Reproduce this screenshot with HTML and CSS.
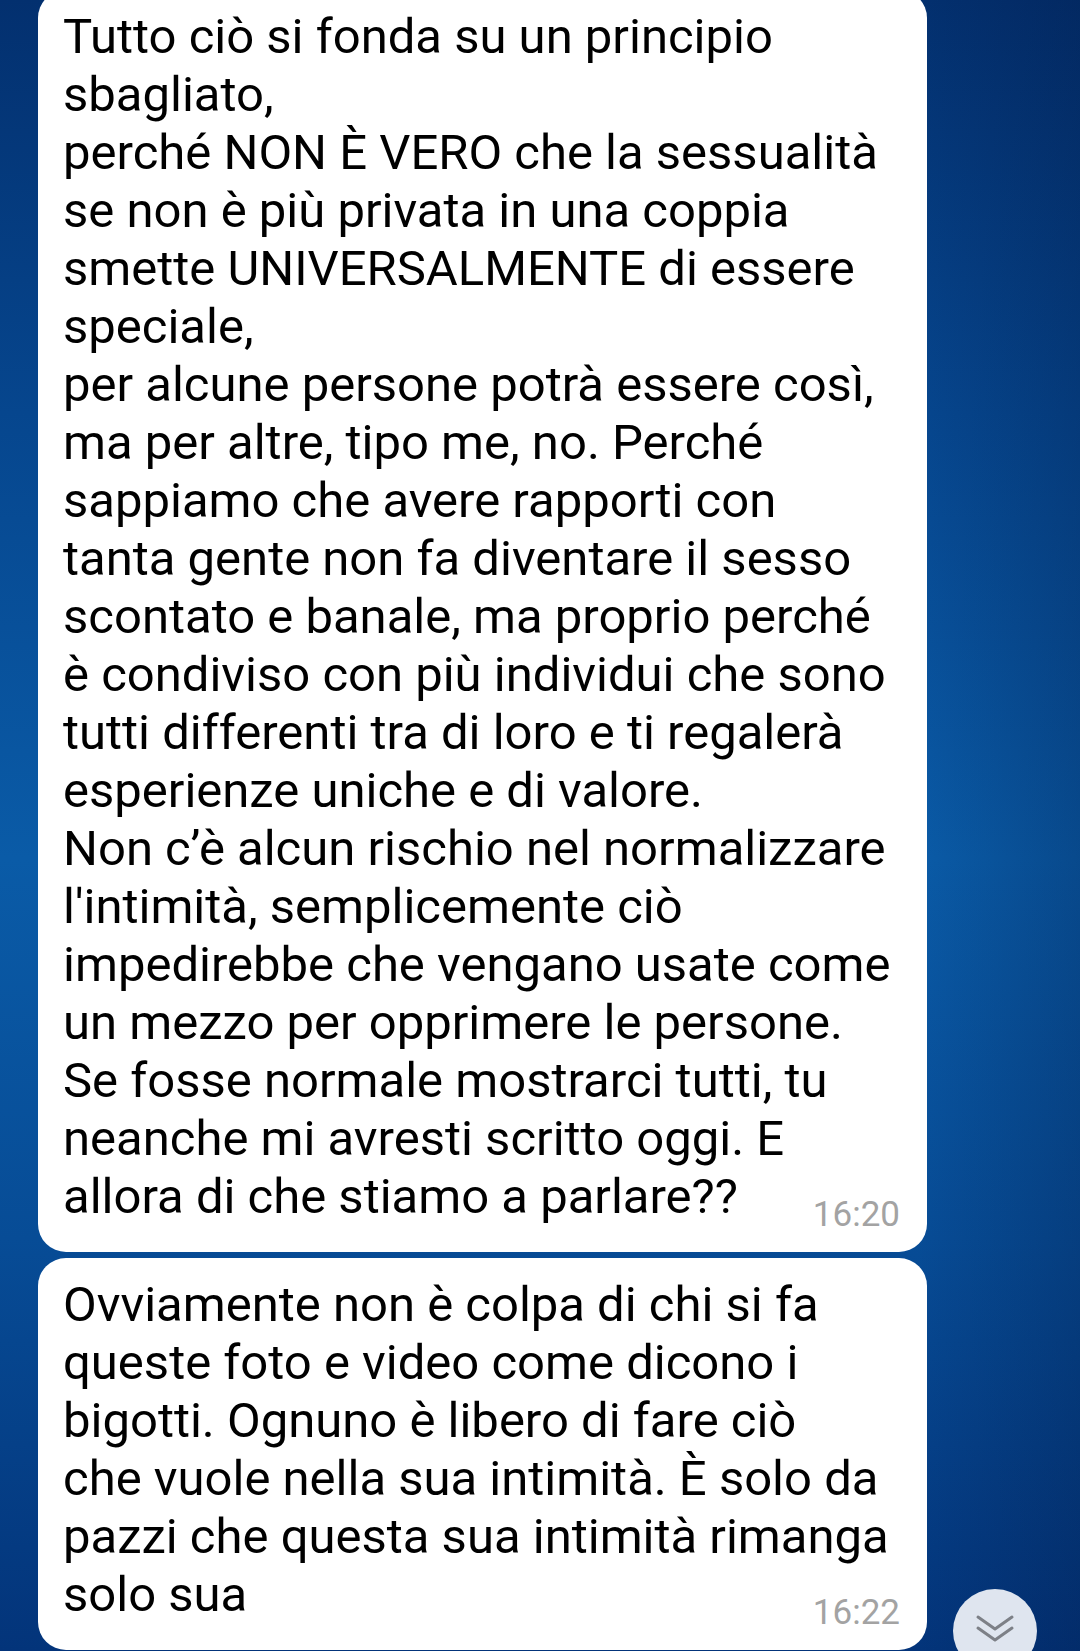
FILE: index.html
```html
<!DOCTYPE html>
<html lang="it">
<head>
  <meta charset="UTF-8" />
  <meta name="viewport" content="width=device-width, initial-scale=1.0"/>
  <title>Chat</title>
  <link rel="stylesheet" href="styles.css">
</head>
<body>
  <div class="chat">
    <div class="bubble first">
      <p class="msg">Tutto ciò si fonda su un principio<br>
sbagliato,<br>
perché NON È VERO che la sessualità<br>
se non è più privata in una coppia<br>
smette UNIVERSALMENTE di essere<br>
speciale,<br>
per alcune persone potrà essere così,<br>
ma per altre, tipo me, no. Perché<br>
sappiamo che avere rapporti con<br>
tanta gente non fa diventare il sesso<br>
scontato e banale, ma proprio perché<br>
è condiviso con più individui che sono<br>
tutti differenti tra di loro e ti regalerà<br>
esperienze uniche e di valore.<br>
Non c’è alcun rischio nel normalizzare<br>
l'intimità, semplicemente ciò<br>
impedirebbe che vengano usate come<br>
un mezzo per opprimere le persone.<br>
Se fosse normale mostrarci tutti, tu<br>
neanche mi avresti scritto oggi. E<br>
allora di che stiamo a parlare??</p>
      <span class="time">16:20</span>
    </div>

    <div class="bubble">
      <p class="msg">Ovviamente non è colpa di chi si fa<br>
queste foto e video come dicono i<br>
bigotti. Ognuno è libero di fare ciò<br>
che vuole nella sua intimità. È solo da<br>
pazzi che questa sua intimità rimanga<br>
solo sua</p>
      <span class="time">16:22</span>
    </div>
  </div>

  <button class="scroll-down" aria-label="Scorri in basso">
    <svg width="40" height="34" viewBox="0 0 40 34">
      <path d="M3 3 L20 15 L37 3" fill="none" stroke="#7d8087" stroke-width="3" stroke-linecap="round" stroke-linejoin="round"/>
      <path d="M3 14 L20 26 L37 14" fill="none" stroke="#7d8087" stroke-width="3" stroke-linecap="round" stroke-linejoin="round"/>
    </svg>
  </button>
</body>
</html>
```

FILE: styles.css
```css
html, body {
  height: 100%;
}

body {
  margin: 0;
  overflow: hidden;
  font-family: Roboto, "Noto Sans", sans-serif;
  background:
    linear-gradient(90deg, rgba(2, 20, 60, 0) 85%, rgba(2, 20, 60, 0.25) 100%),
    linear-gradient(180deg, #03306f 0%, #06468e 25%, #0a5ba7 52%, #074c96 75%, #03347a 100%);
}

.chat {
  display: flex;
  flex-direction: column;
  gap: 6px;
  padding: 0 153px 0 38px;
  margin-top: -10px;
}

.bubble {
  position: relative;
  background: #fff;
  border-radius: 28px;
  padding: 18px 25px 26px;
}

.msg {
  margin: 0;
  font-size: 49px;
  line-height: 58px;
  color: #000;
  white-space: nowrap;
}

.time {
  position: absolute;
  right: 27px;
  bottom: 17px;
  font-size: 35px;
  line-height: 40px;
  color: #a3a3a3;
}

.scroll-down {
  position: fixed;
  left: 953px;
  top: 1589px;
  width: 84px;
  height: 84px;
  border: 0;
  border-radius: 50%;
  background: #dfe5ef;
  display: flex;
  justify-content: center;
  padding: 25px 0 0;
}
```
